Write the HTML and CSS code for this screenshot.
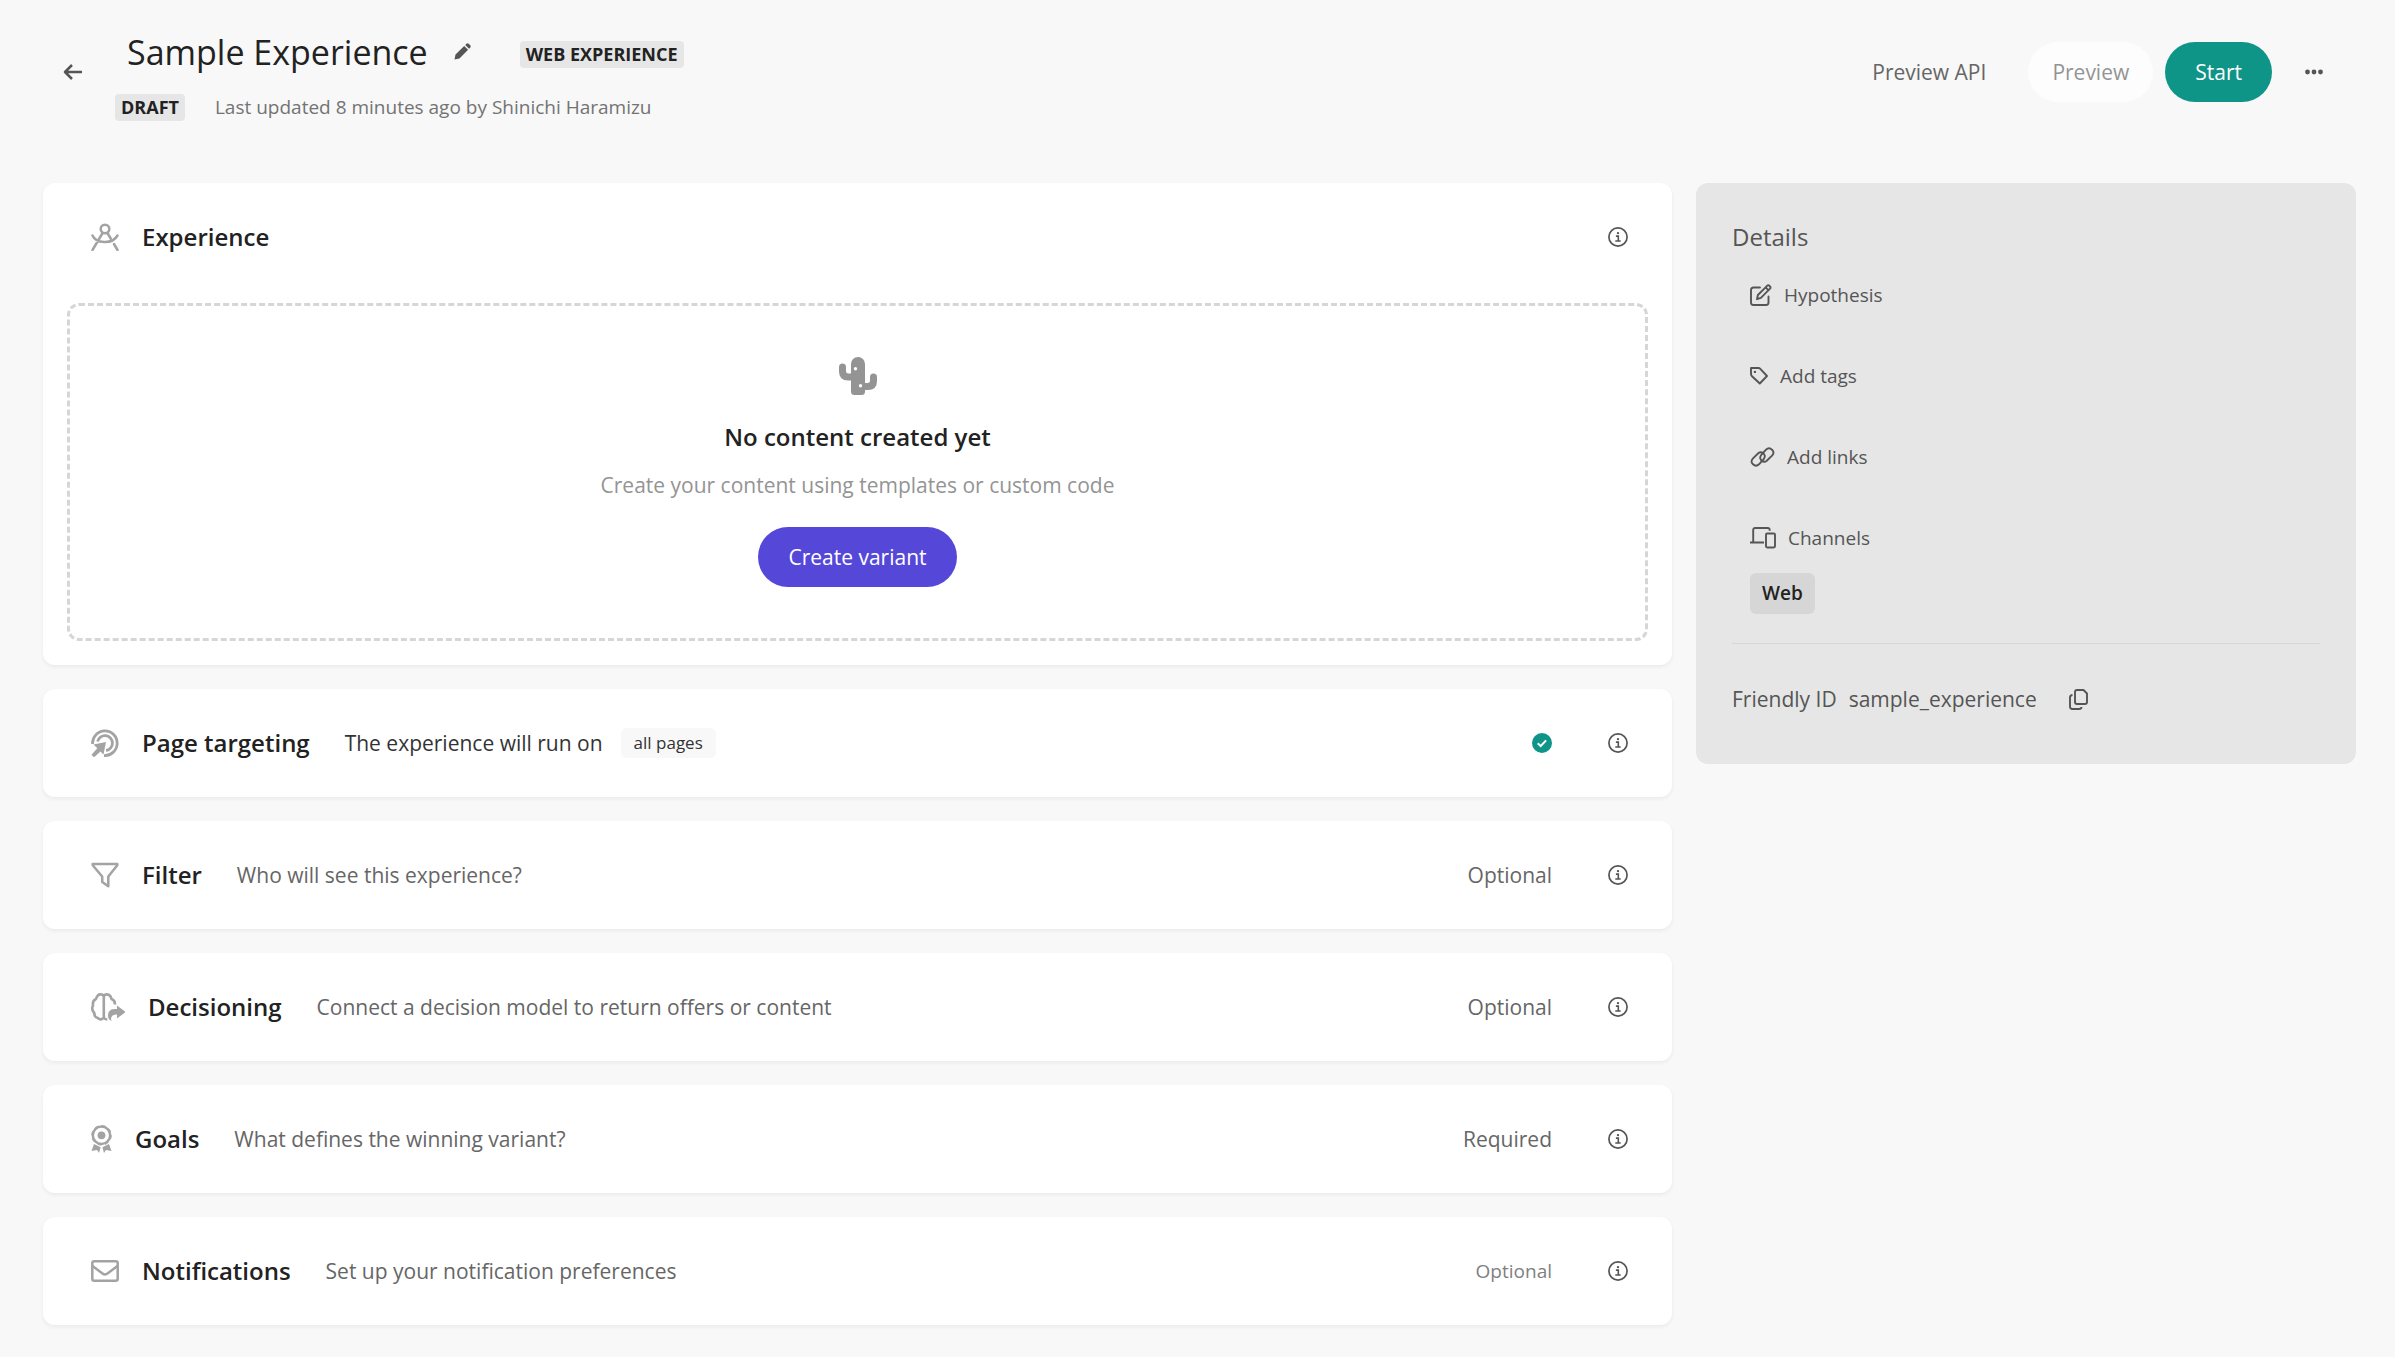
FILE: index.html
```html
<!DOCTYPE html>
<html lang="en">
<head>
<meta charset="utf-8">
<meta name="viewport" content="width=device-width, initial-scale=1">
<title>Sample Experience</title>
<link rel="stylesheet" href="styles.css">
</head>
<body>
<svg class="sprite" aria-hidden="true">
  <symbol id="info" viewBox="0 0 20 20"><circle cx="10" cy="10" r="9.1" fill="none" stroke="currentColor" stroke-width="1.7"/><circle cx="10" cy="6.1" r="1.2" fill="currentColor"/><path d="M7.900 9.100h2.400v4.600M7.300 14h5.400" fill="none" stroke="currentColor" stroke-width="1.600"/></symbol>
</svg>
<header class="topbar">
  <button class="icon-btn back" type="button" aria-label="Back">
    <svg width="20" height="18" viewBox="0 0 20 18"><path d="M9 2L2 9l7 7M2.500 9H19" fill="none" stroke="currentColor" stroke-width="2.500" stroke-linejoin="round"/></svg>
  </button>
  <div class="heading">
    <div class="heading-row">
      <h1 class="title">Sample Experience</h1>
      <button class="icon-btn edit" type="button" aria-label="Rename">
        <svg width="18" height="17" viewBox="0 0 18 17"><path d="M0.500 16.500l1-5L10.200 2.900l3.900 3.900L5.500 15.500zM11.200 1.900l1-1q1.400-1.200 2.700 0l1.200 1.200q1.200 1.300 0 2.700l-1 1z" fill="currentColor"/></svg>
      </button>
      <span class="badge">WEB EXPERIENCE</span>
    </div>
    <div class="heading-meta">
      <span class="badge">DRAFT</span>
      <span class="updated">Last updated 8 minutes ago by Shinichi Haramizu</span>
    </div>
  </div>
  <div class="actions">
    <a class="api-link" href="#api">Preview API</a>
    <button class="btn btn-preview" type="button" disabled>Preview</button>
    <button class="btn btn-start" type="button">Start</button>
    <button class="icon-btn more" type="button" aria-label="More actions">
      <svg width="18" height="6" viewBox="0 0 18 6"><g fill="currentColor"><circle cx="2.500" cy="3" r="2.400"/><circle cx="9" cy="3" r="2.400"/><circle cx="15.500" cy="3" r="2.400"/></g></svg>
    </button>
  </div>
</header>
<div class="layout">
  <main class="cards">
    <section class="card">
      <div class="card-row">
        <svg class="card-icon" width="28" height="28" viewBox="0 0 28 28" fill="none" stroke="currentColor" stroke-width="2.500" stroke-linecap="round"><circle cx="14" cy="6" r="4.300"/><path d="M11.600 10L1.500 27M16.400 10l3.300 5.500M23 21l3.500 6M1.500 12.500C5 20.500 21 22 26.500 12.500"/></svg>
        <h2 class="card-title">Experience</h2>
        <button class="icon-btn info" type="button" aria-label="About experience"><svg width="20" height="20"><use href="#info"/></svg></button>
      </div>
      <div class="empty">
        <svg class="empty-icon" width="38" height="38" viewBox="0 0 38 38"><path fill="currentColor" fill-rule="evenodd" d="M12 7a7 7 0 0 1 14 0v19h2.500q2.500 0 2.500-2.500V20a3.500 3.500 0 0 1 7 0v4q0 9-9 9H26v1.500q0 3.500-3.500 3.500h-7q-3.500 0-3.500-3.500V23.500H9q-9 0-9-9V10a3.500 3.500 0 0 1 7 0v4q0 2.500 2.500 2.500H12zM16.500 10a1.700 1.700 0 1 0 0 3.400 1.700 1.700 0 0 0 0-3.400zM21.500 27a1.700 1.700 0 1 0 0 3.400 1.700 1.700 0 0 0 0-3.400z"/></svg>
        <h3 class="empty-title">No content created yet</h3>
        <p class="empty-text">Create your content using templates or custom code</p>
        <button class="btn btn-create" type="button">Create variant</button>
      </div>
    </section>
    <section class="card card-row">
      <svg class="card-icon" width="28" height="28" viewBox="0 0 28 28"><g fill="none" stroke="currentColor" stroke-width="2.800"><path d="M1.600 15A12.300 12.300 0 1 1 13 26.500"/><path d="M6.600 12.500a7.500 7.500 0 1 1 8.500 9"/></g><path d="M2.500 15.500l12.500-2.500L12.500 25.500l-3-3-6.500 5.800-2.500-2.500 5.800-6.500z" fill="currentColor"/></svg>
      <h2 class="card-title">Page targeting</h2>
      <p class="card-text strong">The experience will run on</p>
      <span class="pill">all pages</span>
      <svg class="status check" width="20" height="20" viewBox="0 0 20 20" role="img" aria-label="Complete"><circle cx="10" cy="10" r="10" fill="currentColor"/><path d="M5.700 10.200l3 2.800 5.400-5.600" fill="none" stroke="#fff" stroke-width="2"/></svg>
      <button class="icon-btn info" type="button" aria-label="About page targeting"><svg width="20" height="20"><use href="#info"/></svg></button>
    </section>
    <section class="card card-row">
      <svg class="card-icon" width="28" height="26" viewBox="0 0 28 26"><path d="M1.700 2h24.600v1.200L17.300 14.500v9.700l-6.100-4.200v-5.500L1.700 3.200z" fill="none" stroke="currentColor" stroke-width="2.500" stroke-linejoin="round"/></svg>
      <h2 class="card-title">Filter</h2>
      <p class="card-text">Who will see this experience?</p>
      <span class="status">Optional</span>
      <button class="icon-btn info" type="button" aria-label="About filter"><svg width="20" height="20"><use href="#info"/></svg></button>
    </section>
    <section class="card card-row">
      <svg class="card-icon" width="34" height="28" viewBox="0 0 34 28"><path d="M12.800 3.500v21q-2.800 3.500-6 .5-3.800-.8-3.500-5.200Q0 16.500 2 12.500 1.200 7.500 5 6 6.500 1 9.800 1.400q2.500.2 3 2.100zM12.800 3.500q.8-2.200 3-2.100Q19.500 1.500 20.500 6q3.800 1.500 3.300 5.500M12.800 24.500q1 2 3.500 2" fill="none" stroke="currentColor" stroke-width="2.600" stroke-linejoin="round"/><path d="M26 12.500l8.500 6.500-8.500 6.500v-4q-4.500-.3-5.500 2.500-.8 2 0 4-3.500-1.500-3.500-5.500 0-6 6-6.500h3z" fill="currentColor"/></svg>
      <h2 class="card-title">Decisioning</h2>
      <p class="card-text">Connect a decision model to return offers or content</p>
      <span class="status">Optional</span>
      <button class="icon-btn info" type="button" aria-label="About decisioning"><svg width="20" height="20"><use href="#info"/></svg></button>
    </section>
    <section class="card card-row">
      <svg class="card-icon" width="21" height="28" viewBox="0 0 21 28"><circle cx="10.500" cy="10.300" r="8.700" fill="none" stroke="currentColor" stroke-width="2.500"/><circle cx="10.500" cy="10.300" r="9.800" fill="none" stroke="currentColor" stroke-width="1" stroke-dasharray="4 3.700"/><circle cx="10.500" cy="10.300" r="3.900" fill="currentColor"/><path d="M3 19l6.600 3.200L8 28l-2-3-5.500 1zM18 19l-6.600 3.200L13 28l2-3 5.500 1z" fill="currentColor"/></svg>
      <h2 class="card-title">Goals</h2>
      <p class="card-text">What defines the winning variant?</p>
      <span class="status">Required</span>
      <button class="icon-btn info" type="button" aria-label="About goals"><svg width="20" height="20"><use href="#info"/></svg></button>
    </section>
    <section class="card card-row">
      <svg class="card-icon" width="28" height="22" viewBox="0 0 28 22"><g fill="none" stroke="currentColor" stroke-width="2.500"><rect x="1.300" y="1.300" width="25.400" height="19.400" rx="2"/><path d="M1.500 6l10 7.500q2.500 1.800 5 0l10-7.500"/></g></svg>
      <h2 class="card-title">Notifications</h2>
      <p class="card-text">Set up your notification preferences</p>
      <span class="status small">Optional</span>
      <button class="icon-btn info" type="button" aria-label="About notifications"><svg width="20" height="20"><use href="#info"/></svg></button>
    </section>
  </main>
  <aside class="details">
    <h2 class="details-title">Details</h2>
    <div class="details-list">
      <button class="detail" type="button">
        <svg width="22" height="22" viewBox="0 0 22 22" fill="none" stroke="currentColor" stroke-width="1.900" stroke-linejoin="round" stroke-linecap="round"><path d="M10 3.500H3.500Q1 3.500 1 6v12.500Q1 21 3.500 21H16q2.500 0 2.500-2.500V12.500"/><path d="M7 15.200l.9-4.200 9.200-9.200q1.200-1 2.300 0l.6.600q1 1.100 0 2.300l-9.100 9.200zM15.600 3.300l3 3"/></svg>
        Hypothesis</button>
      <button class="detail" type="button">
        <svg width="18" height="18" viewBox="0 0 18 18"><path d="M1 1h7.500q1 0 1.800.8L17 9l-7.200 7.500L2 9.200Q1 8.300 1 7z" fill="none" stroke="currentColor" stroke-width="1.900" stroke-linejoin="round"/><circle cx="4.900" cy="4.900" r="1.200" fill="currentColor"/></svg>
        Add tags</button>
      <button class="detail" type="button">
        <svg width="25" height="20" viewBox="0 0 25 20" fill="none" stroke="currentColor" stroke-width="1.900" stroke-linecap="round"><path d="M12.800 14.500q-4.500-2.800-1.300-7L16 2.700q3-2.700 6 0t0 6l-5.500 5.200q-1.600 1.200-3.200.6"/><path d="M12.200 5.500q4.500 2.800 1.300 7L9 17.300q-3 2.700-6 0t0-6L8.500 6.100q1.600-1.200 3.200-.6"/></svg>
        Add links</button>
      <div class="detail">
        <svg width="26" height="22" viewBox="0 0 26 22" fill="none" stroke="currentColor" stroke-width="1.900" stroke-linejoin="round"><path d="M3.200 15V3q0-2 2-2h12.500q2 0 2 2v.8M0 15.500h14"/><rect x="16" y="6.500" width="9" height="14" rx="1.200"/></svg>
        Channels</div>
    </div>
    <span class="channel">Web</span>
    <hr class="rule">
    <div class="friendly">
      <span>Friendly ID</span>
      <span>sample_experience</span>
      <button class="icon-btn copy" type="button" aria-label="Copy ID">
        <svg width="19" height="21" viewBox="0 0 19 21" fill="none" stroke="currentColor" stroke-width="1.900" stroke-linejoin="round"><path d="M8 1h6.500l3.500 3.500V13q0 2-2 2H8q-2 0-2-2V3q0-2 2-2z"/><path d="M3.500 6Q1 6 1 8.500v9Q1 20 3.500 20H10q2.500 0 2.500-2"/></svg>
      </button>
    </div>
  </aside>
</div>
</body>
</html>
```
FILE: styles.css
```css
* {
  box-sizing: border-box;
}

body {
  margin: 0;
  padding: 24px 39px 24px 43px;
  background: #f8f8f8;
  color: #222;
  font: 21px/30px "Open Sans", "Noto Sans", sans-serif;
}

h1, h2, h3, p {
  margin: 0;
}

button {
  font: inherit;
  color: inherit;
  border: 0;
  background: none;
  padding: 0;
  cursor: pointer;
}

svg {
  display: block;
  flex: none;
}

.sprite {
  position: absolute;
  width: 0;
  height: 0;
}

.icon-btn {
  display: inline-flex;
  align-items: center;
  justify-content: center;
  color: #555;
}

/* Header */
.topbar {
  display: flex;
  align-items: flex-start;
  min-height: 159px;
  padding-right: 12px;
}

.back {
  width: 60px;
  height: 96px;
}

.heading {
  flex: 1;
  padding-left: 12px;
}

.heading-row,
.heading-meta {
  display: flex;
  align-items: center;
}

.heading-row {
  height: 60px;
}

.heading-meta {
  gap: 30px;
  padding-top: 8px;
}

.title {
  padding: 0 26px 4px 12px;
  font-size: 34px;
  line-height: 48px;
  font-weight: 400;
}

.edit {
  padding-bottom: 6px;
  margin-right: 48px;
}

.badge {
  padding: 0 6px;
  border-radius: 4px;
  background: #e6e6e6;
  font-size: 18px;
  line-height: 27px;
  font-weight: 700;
}

.updated {
  color: #737373;
  font-size: 19px;
}

.actions {
  display: flex;
  align-items: center;
  gap: 12px;
  padding-top: 18px;
}

.btn {
  height: 60px;
  padding: 0 30px;
  border-radius: 30px;
  color: #fff;
}

.api-link {
  margin-right: 30px;
  color: #666;
  text-decoration: none;
}

.btn-preview {
  padding: 0 24px;
  background: #fdfdfd;
  color: #949494;
}

.btn-start {
  background: #0f9488;
}

.more {
  width: 60px;
  height: 60px;
}

/* Layout */
.layout {
  display: grid;
  grid-template-columns: minmax(0, 1629fr) minmax(0, 660fr);
  gap: 24px;
  align-items: start;
}

.cards {
  display: grid;
  gap: 24px;
}

.card {
  border-radius: 12px;
  background: #fff;
  box-shadow: 0 2px 4px rgba(0, 0, 0, 0.06);
}

.card-row {
  display: flex;
  align-items: center;
  min-height: 108px;
  padding: 0 44px 0 48px;
}

.card-icon {
  color: #a3a3a3;
}

.card-title {
  padding-left: 23px;
  font-size: 24px;
  line-height: 36px;
  font-weight: 550;
}

.card-text {
  padding-left: 35px;
  color: #666;
}

.card-text.strong {
  color: #333;
}

.pill {
  margin-left: 18px;
  padding: 0 13px;
  border-radius: 6px;
  background: #f8f8f8;
  color: #333;
  font-size: 17px;
}

.status {
  margin-left: auto;
  color: #666;
}

.status.small {
  color: #808080;
  font-size: 19px;
}

.status.check {
  color: #0f9488;
}

.info {
  margin-left: 56px;
}

.card-title + .info {
  margin-left: auto;
}

.empty {
  display: flex;
  flex-direction: column;
  align-items: center;
  margin: 12px 24px 24px;
  padding: 51px 0;
  border: 3px dashed #d6d6d6;
  border-radius: 12px;
}

.empty-icon {
  color: #949494;
}

.empty-title {
  padding-top: 24px;
  font-size: 24px;
  line-height: 36px;
  font-weight: 550;
}

.empty-text {
  padding: 15px 0 27px;
  color: #949494;
}

.btn-create {
  background: #5548d9;
}

/* Details */
.details {
  padding: 36px 36px 50px;
  border-radius: 12px;
  background: #e6e6e6;
  color: #555;
}

.details-title {
  font-size: 24px;
  line-height: 36px;
  font-weight: 400;
}

.details-list {
  display: grid;
  justify-items: start;
  gap: 51px;
  padding: 25px 0 0 18px;
}

.detail {
  display: flex;
  align-items: center;
  gap: 12px;
  font-size: 19px;
  line-height: 30px;
}

.channel {
  display: inline-block;
  margin: 20px 0 0 18px;
  padding: 0 12px;
  border-radius: 6px;
  background: #d6d6d6;
  color: #222;
  font-size: 19px;
  line-height: 41px;
  font-weight: 600;
}

.rule {
  margin: 29px 0 40px;
  border: 0;
  border-top: 1px solid #d6d6d6;
}

.friendly {
  display: flex;
  align-items: center;
  gap: 12px;
}

.copy {
  margin-left: 20px;
}
```
